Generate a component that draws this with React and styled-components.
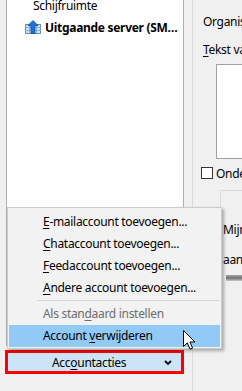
import React from "react";
import styled, { createGlobalStyle } from "styled-components";

const GlobalStyle = createGlobalStyle`
  html, body {
    margin: 0;
    padding: 0;
    background: #f0f0f0;
  }
  body {
    font-family: "Noto Sans", "Open Sans", sans-serif;
    font-size: 12px;
    letter-spacing: -0.3px;
    color: #000;
  }
`;

const Screen = styled.div`
  position: relative;
  width: 242px;
  height: 391px;
  overflow: hidden;
  display: flex;
  background: #f0f0f0;
`;

const LeftPane = styled.div`
  width: 192px;
  flex-shrink: 0;
  box-sizing: border-box;
  padding-left: 5px;
  display: flex;
  flex-direction: column;
`;

const Tree = styled.div`
  margin: -7px 0 0 1px;
  width: 178px;
  height: 353px;
  box-sizing: border-box;
  background: #fff;
  border: 1px solid #adadad;
`;

const TreeRow = styled.div`
  height: 22px;
  display: flex;
  align-items: center;
  gap: 4px;
  padding-left: ${(p) => p.$indent}px;
  padding-right: 5px;
  font-weight: ${(p) => (p.$bold ? 700 : 400)};
`;

const RowText = styled.span`
  white-space: nowrap;
  overflow: hidden;
  text-overflow: ellipsis;
`;

const ButtonFrame = styled.div`
  margin-top: 4px;
  width: 179px;
  height: 24px;
  box-sizing: border-box;
  border: 3px solid #ff0000;
  display: flex;
`;

const ActionButton = styled.div`
  flex: 1;
  display: flex;
  align-items: center;
  justify-content: space-between;
  padding: 0 9px 0 44px;
  background: #cce4f7;
`;

const RightPane = styled.div`
  flex: 1;
  border-left: 1px solid #d9d9d9;
  padding-left: 10px;
  display: flex;
  flex-direction: column;
  white-space: nowrap;
`;

const Label = styled.div`
  height: 18px;
  line-height: 18px;
  margin-top: ${(p) => p.$top}px;
`;

const TextBox = styled.div`
  margin: 5px 0 0 13px;
  height: 95px;
  box-sizing: border-box;
  background: #fff;
  border: 1px solid #a0a0a0;
  border-right: none;
`;

const CheckRow = styled.div`
  margin: 7px 0 0 -2px;
  display: flex;
  align-items: center;
  gap: 3px;
  height: 14px;
`;

const CheckBox = styled.span`
  width: 12px;
  height: 12px;
  flex-shrink: 0;
  box-sizing: border-box;
  border: 1px solid #333;
  background: #fff;
`;

const GroupBox = styled.div`
  margin: 10px 0 0 17px;
  height: 120px;
  border-top: 1px solid #dcdcdc;
  border-left: 1px solid #dcdcdc;
  padding: 30px 0 0 2px;
  display: flex;
  flex-direction: column;
`;

const GroupText = styled.div`
  height: 18px;
  line-height: 18px;
  margin-bottom: ${(p) => p.$gap || 0}px;
`;

const Slider = styled.div`
  margin: 6px 0 0 3px;
  height: 6px;
  background: linear-gradient(#a8a8a8, #6f6f6f 50%, #c8c8c8);
`;

const Menu = styled.div`
  position: absolute;
  left: 7px;
  top: 207px;
  width: 215px;
  box-sizing: border-box;
  padding: 3px 1px 1px;
  background: #f2f2f2;
  border: 1px solid #cccccc;
  box-shadow: 2px 2px 3px rgba(0, 0, 0, 0.3);
`;

const MenuItem = styled.div`
  height: 22px;
  line-height: 22px;
  padding-left: 34px;
  white-space: nowrap;
  color: ${(p) => (p.$disabled ? "#6d6d6d" : "#000")};
  background: ${(p) => (p.$active ? "#91c9f7" : "transparent")};
`;

const Separator = styled.div`
  height: 1px;
  margin: 1px 0 2px 28px;
  background: #d7d7d7;
`;

const Key = styled.u`
  text-decoration: underline;
  text-underline-offset: 2px;
  text-decoration-thickness: 1px;
`;

const Cursor = styled.svg`
  position: absolute;
  left: 183px;
  top: 330px;
`;

const ServerIcon = () => (
  <svg width="16" height="14" viewBox="0 0 16 14" style={{ flexShrink: 0 }}>
    <rect x="0.5" y="4.5" width="15" height="9" fill="#cfe3f5" stroke="#6a8fb5" />
    <path d="M0.5 7.5h15M0.5 10.5h15M4.5 4.5v9M11.5 4.5v9" stroke="#8aaed0" />
    <path d="M8 0.5 L13 5.5 H10 V13.5 H6 V5.5 H3 Z" fill="#1f72d8" stroke="#0d4f9e" strokeWidth="0.8" />
  </svg>
);

const Chevron = () => (
  <svg width="8" height="5" viewBox="0 0 8 5">
    <path d="M1 1 L4 4 L7 1" fill="none" stroke="#000" strokeWidth="1.8" />
  </svg>
);

export default function App() {
  return (
    <>
      <GlobalStyle />
      <Screen>
        <LeftPane>
          <Tree>
            <TreeRow $indent={26}>
              <RowText>Schijfruimte</RowText>
            </TreeRow>
            <TreeRow $indent={18} $bold>
              <ServerIcon />
              <RowText>Uitgaande server (SMTP)</RowText>
            </TreeRow>
          </Tree>
          <ButtonFrame>
            <ActionButton>
              <span>
                Acc<Key>o</Key>untacties
              </span>
              <Chevron />
            </ActionButton>
          </ButtonFrame>
        </LeftPane>

        <RightPane>
          <Label $top={13}>Organisatie:</Label>
          <Label $top={10}>
            <Key>T</Key>ekst van handtekening:
          </Label>
          <TextBox />
          <CheckRow>
            <CheckBox />
            <span>Onderteken</span>
          </CheckRow>
          <GroupBox>
            <GroupText $gap={12}>Mijn</GroupText>
            <GroupText>aanmaken</GroupText>
            <Slider />
          </GroupBox>
        </RightPane>

        <Menu>
          <MenuItem>
            <Key>E</Key>-mailaccount toevoegen...
          </MenuItem>
          <MenuItem>
            <Key>C</Key>hataccount toevoegen...
          </MenuItem>
          <MenuItem>
            <Key>F</Key>eedaccount toevoegen...
          </MenuItem>
          <MenuItem>
            <Key>A</Key>ndere account toevoegen...
          </MenuItem>
          <Separator />
          <MenuItem $disabled>
            Als stan<Key>d</Key>aard instellen
          </MenuItem>
          <MenuItem $active>
            Account <Key>v</Key>erwijderen
          </MenuItem>
        </Menu>

        <Cursor width="13" height="21" viewBox="0 0 13 21">
          <path
            d="M0.5 0.5 L0.5 16.5 L4.3 12.8 L7 19.2 L9.6 18.1 L7 12 L12 12 Z"
            fill="#fff"
            stroke="#000"
            strokeWidth="1"
            strokeLinejoin="round"
          />
        </Cursor>
      </Screen>
    </>
  );
}
